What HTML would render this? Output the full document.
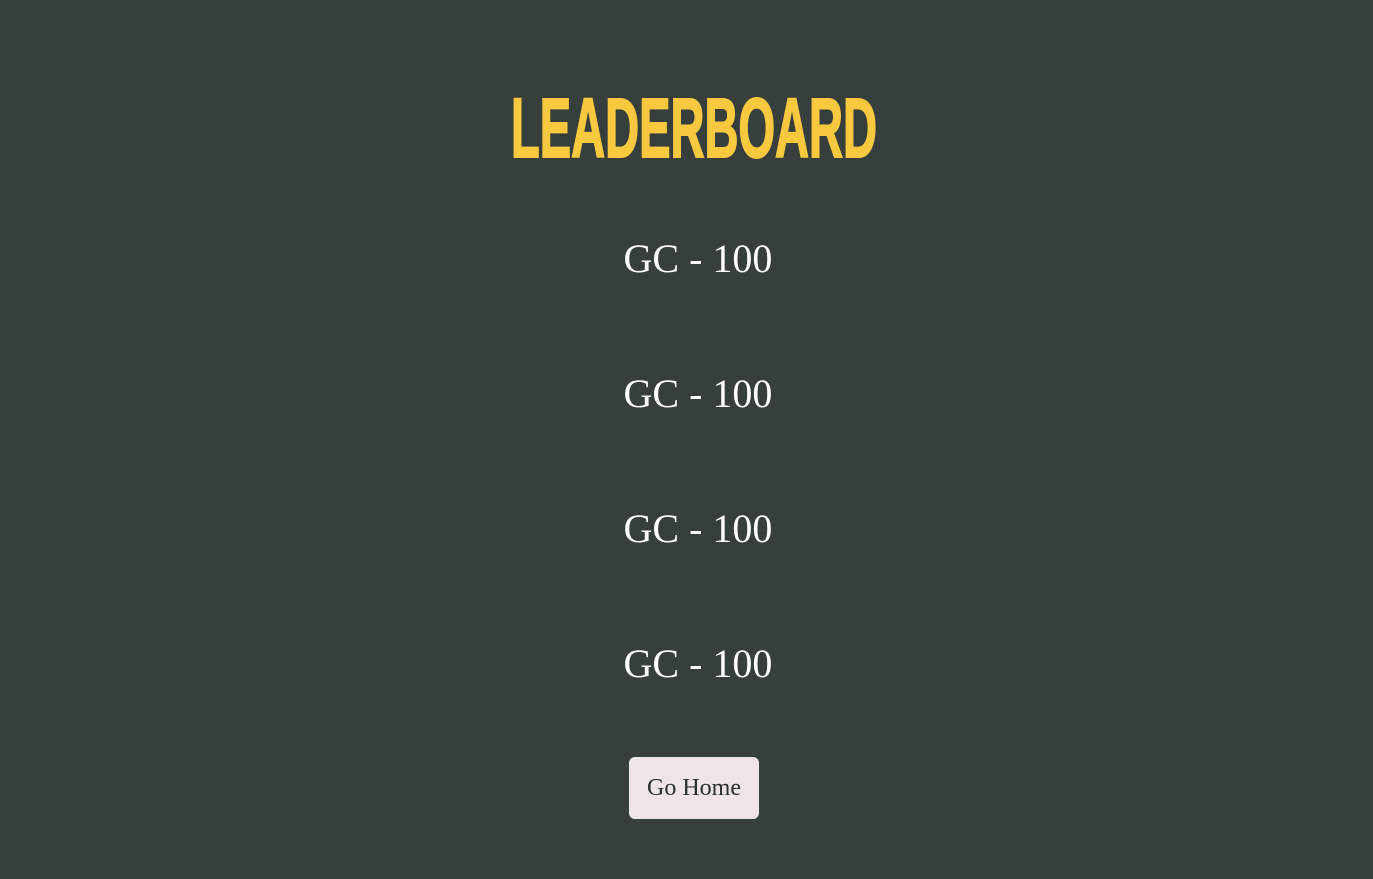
<!DOCTYPE html>
<html><head><meta charset="utf-8"><style>
html,body{margin:0;padding:0;background:#363f3c;width:1373px;height:879px;overflow:hidden}
svg{position:absolute;left:0;top:0}
.btn{position:absolute;left:629px;top:757px;width:130px;height:62px;background:#efe5e8;border-radius:6px;box-sizing:border-box;text-align:center;line-height:62px;font-family:"Liberation Serif",serif;font-size:24px;color:#2a2f2d}
</style></head><body>
<svg width="1373" height="879">
<text x="511" y="157" textLength="366" lengthAdjust="spacingAndGlyphs" font-family="Liberation Sans, sans-serif" font-weight="bold" font-size="84" fill="#f8c93e" stroke="#f8c93e" stroke-width="2">LEADERBOARD</text>
<g font-family="Liberation Serif, serif" font-size="40" fill="#ffffff" text-anchor="middle">
<text x="698" y="272">GC - 100</text>
<text x="698" y="407">GC - 100</text>
<text x="698" y="542">GC - 100</text>
<text x="698" y="677">GC - 100</text>
</g>
</svg>
<div class="btn">Go Home</div>
</body></html>
